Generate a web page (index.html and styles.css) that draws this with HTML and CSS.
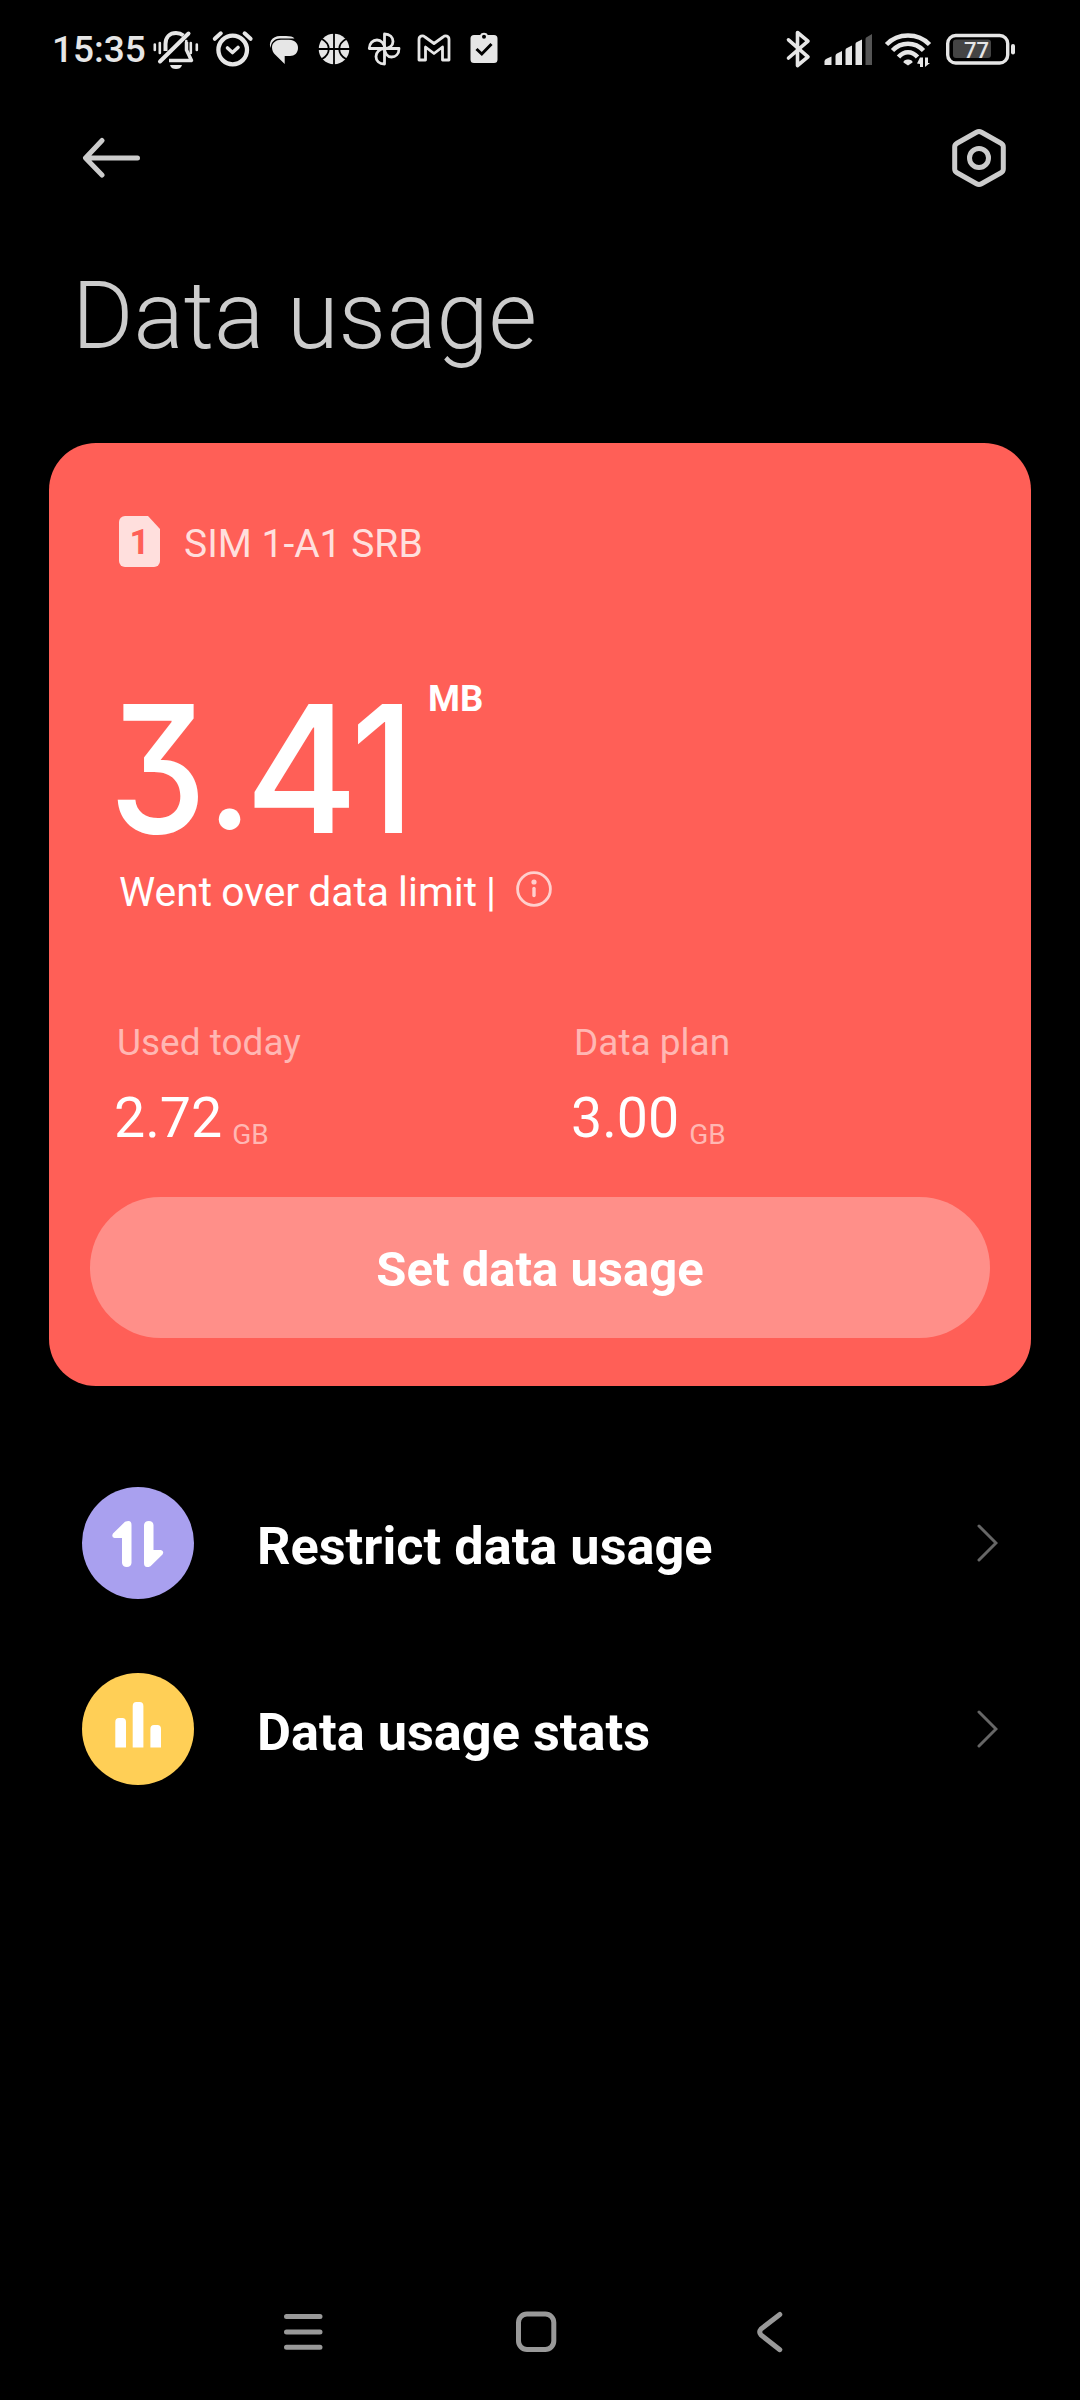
FILE: index.html
```html
<!DOCTYPE html>
<html lang="en">
<head>
    <meta charset="UTF-8">
    <meta name="viewport" content="width=device-width, initial-scale=1.0">
    <title>Data usage</title>
    <link rel="stylesheet" href="styles.css">
</head>
<body>
    <div class="status-bar">
        <span class="time">15:35</span>
        <!-- Notification icons -->
        <svg class="status-left" width="350" height="48" viewBox="150 26 350 48">
            <g fill="none" stroke="#e6e6e6" stroke-width="4" stroke-linecap="round" stroke-linejoin="round">
                <path d="M160 61.500L188.500 33.500"/>
                <path d="M165.500 51V44C165.500 37 170 33 176 33C179 33 181.500 34 183.500 35.500" stroke-linecap="butt"/>
                <path d="M186.500 42V50L191.500 60.500H169" stroke-width="3.500" stroke-linecap="butt"/>
                <path d="M154.800 44.500V50M159.800 43V53M190.800 43V53M196.800 44.500V50M186.300 41V48" stroke-width="2.600"/>
                <circle cx="232.700" cy="50" r="14.300" stroke-width="4.300"/>
                <path d="M214.800 38.800L220.800 33.300M250.600 38.800L244.600 33.300"/>
                <path d="M227.500 48L232.500 52.500L238 47.500" stroke-width="3.600"/>
            </g>
            <path fill="#e6e6e6" d="M170 65H182C181 68 179 69 176 69S171 68 170 65Z"/>
            <path fill="#e6e6e6" d="M280 36H286C290 36 293 36.700 294.500 38.500H280C274 38.500 270.500 43 270.800 48C269.500 46 269.700 43 271 40.500C273 37.500 276 36 280 36Z"/>
            <path fill="#e6e6e6" d="M281 39.800H289C295 39.800 298 43.500 298 48C298 53 294.500 56 290 56H284.700V64L275 54.500C273 52.500 272 50 272 47.500C272 43 276 39.800 281 39.800Z"/>
            <circle cx="334" cy="49" r="15.300" fill="#e6e6e6"/>
            <path d="M334 33V65M318 49H350M322 39C331 44 331 54 322 59M346 39C337 44 337 54 346 59" fill="none" stroke="#000" stroke-width="1.800"/>
            <g fill="none" stroke="#e6e6e6" stroke-width="2.800" stroke-linejoin="round">
                <path d="M384.500 48.500V34C390 34 393 37.500 393 41.500S389.500 48.500 384.500 48.500"/>
                <path d="M384.500 48.500H399C399 54 395.500 57 391.500 57S384.500 53.500 384.500 48.500"/>
                <path d="M384.500 48.500V64C379 64 376 60.500 376 56.500S379.500 48.500 384.500 48.500"/>
                <path d="M384.500 48.500H369.300C369.300 43 373 40 377 40S384.500 43.500 384.500 48.500"/>
                <path d="M419 60V39.500C419 36 422.500 35 425 37L434 43.500L443 37C445.500 35 449 36 449 39.500V60H442.500V47L434 53.500L425.500 47V60Z"/>
            </g>
            <path fill="#e6e6e6" fill-rule="evenodd" d="M474 35H480.300C481 32 487 32 487.700 35H494Q497.500 35 497.500 38.500V59.500Q497.500 63 494 63H474Q470.500 63 470.500 59.500V38.500Q470.500 35 474 35ZM484 34.800A2 2 0 1 0 484 38.800A2 2 0 1 0 484 34.800Z"/>
            <path d="M476.500 49L481.800 54L491.500 44" fill="none" stroke="#000" stroke-width="3"/>
        </svg>
        <!-- Bluetooth, signal, wifi, battery -->
        <svg class="status-right" width="240" height="48" viewBox="780 26 240 48">
            <path d="M788.500 39.800L808 56.800L797.500 65.500V32.500L808 41.200L788.500 58" fill="none" stroke="#e6e6e6" stroke-width="3.600" stroke-linejoin="round" stroke-linecap="round"/>
            <g fill="#e6e6e6">
                <path d="M824.500 65V61Q825 59 827 58.500L831.500 56.500V65Z"/>
                <path d="M835.500 65V56Q835.500 54 837 53.500L842 51V65Z"/>
                <path d="M845.500 65V50Q845.500 48.500 847 48L852 45.500V65Z"/>
                <path d="M855.500 65V44Q855.500 42.500 857 42L862 39.500V65Z"/>
                <path d="M865.500 65V39Q865.500 37.500 867 37L872 34V65Z" fill="#555"/>
                <path d="M908 65.500L903.500 62.500C903 58.500 913 58.500 912.500 62.500Z"/>
                <path d="M920 57.500H923V67H920V64L917 63.500ZM925 57.500H928V63H930L925 67Z"/>
            </g>
            <g fill="none" stroke="#e6e6e6" stroke-width="4.500">
                <path d="M886.500 44.500C898 32.500 918 32.500 929.500 44.500"/>
                <path d="M892.500 50.500C901 41.500 915 41.500 923.500 50.500"/>
                <path d="M898.500 57C904 50.500 912 50.500 917.500 57"/>
                <rect x="947.700" y="35.500" width="60" height="27.500" rx="8" stroke-width="3.400"/>
            </g>
            <rect x="953" y="39.500" width="38" height="18.500" rx="3" fill="#444"/>
            <text class="battery-text" x="964" y="57.500">77</text>
            <rect x="1011" y="44" width="4" height="10.500" rx="2" fill="#e6e6e6"/>
        </svg>
    </div>

    <header class="toolbar">
        <svg width="60" height="42" viewBox="82 137 60 42" fill="none" stroke="#ccc" stroke-width="5" stroke-linecap="round" stroke-linejoin="round">
            <path d="M86 158H137.500M102 140.500L85.500 158L102 175"/>
        </svg>
        <svg width="54" height="60" viewBox="952 128 54 60" fill="none" stroke="#ccc" stroke-width="5">
            <path d="M976.500 132.200Q979 130.800 981.500 132.200L1001 143.200Q1003.300 144.500 1003.300 147V169Q1003.300 171.500 1001 172.800L981.500 183.800Q979 185.200 976.500 183.800L957 172.800Q954.700 171.500 954.700 169V147Q954.700 144.500 957 143.200Z"/>
            <circle cx="979" cy="158" r="9.500"/>
        </svg>
    </header>

    <h1>Data usage</h1>

    <main class="card">
        <div class="sim">
            <div class="sim-icon">1</div>
            <span>SIM 1-A1 SRB</span>
        </div>
        <div class="amount">
            <div class="number"><span class="three">3</span><span class="dot">.</span><span class="four">4</span><span class="one">1</span></div>
            <span class="unit">MB</span>
        </div>
        <div class="limit">
            <span>Went over data limit |</span>
            <svg width="36" height="36" viewBox="0 0 36 36">
                <circle cx="18" cy="18" r="16.400" fill="none" stroke="#ffcfcd" stroke-width="2.800"/>
                <circle cx="18" cy="11" r="2.600" fill="#ffcfcd"/>
                <path d="M18 17.500V24.500" stroke="#ffcfcd" stroke-width="3.400" stroke-linecap="round"/>
            </svg>
        </div>
        <div class="stats">
            <div class="stat">
                <div class="label">Used today</div>
                <div class="value">2.72<small>GB</small></div>
            </div>
            <div class="stat">
                <div class="label">Data plan</div>
                <div class="value">3.00<small>GB</small></div>
            </div>
        </div>
        <button class="btn">Set data usage</button>
    </main>

    <div class="list">
        <a class="item">
            <svg class="item-icon" width="112" height="112" viewBox="82 1487 112 112">
                <circle cx="138" cy="1543" r="56" fill="#a9a0ef"/>
                <path fill="#fff" d="M122 1538H114.500Q111 1537 113 1533.500L125 1521.800Q131.500 1519 131.500 1525V1563Q131 1567 126.800 1567T122 1563ZM144 1525Q144.500 1521 148.800 1521T153.500 1525V1550H161Q164.500 1551 162.500 1554.500L150.500 1566.200Q144 1569 144 1563Z"/>
            </svg>
            <span>Restrict data usage</span>
            <svg class="chevron" width="22" height="40" viewBox="0 0 22 40"><path d="M3 3L20 20L3 37"/></svg>
        </a>
        <a class="item">
            <svg class="item-icon" width="112" height="112" viewBox="82 1673 112 112">
                <circle cx="138" cy="1729" r="56" fill="#ffcf56"/>
                <path fill="#fff" d="M115.300 1747.500V1722Q115.300 1718 119 1718H122.300Q126 1718 126 1722V1747.500ZM132.700 1747.500V1706Q132.700 1702 136.400 1702H139.700Q143.400 1702 143.400 1706V1747.500ZM150.400 1747.500V1729Q150.400 1725 154 1725H157.300Q161 1725 161 1729V1747.500Z"/>
            </svg>
            <span>Data usage stats</span>
            <svg class="chevron" width="22" height="40" viewBox="0 0 22 40"><path d="M3 3L20 20L3 37"/></svg>
        </a>
    </div>

    <nav class="nav-bar">
        <svg width="40" height="44" viewBox="283 2310 40 44"><path d="M286.500 2316.500H320M286.500 2332H320M286.500 2347.300H320"/></svg>
        <svg class="home" width="42" height="44" viewBox="515 2310 42 44"><rect x="518.500" y="2314" width="35.300" height="35.500" rx="8.500"/></svg>
        <svg class="back" width="28" height="44" viewBox="755 2310 28 44"><path d="M779.800 2314.500L761 2329Q758.500 2332 761 2335L779.800 2349.700"/></svg>
    </nav>
</body>
</html>
```

FILE: styles.css
```css
:root {
    --bg: #000;
    --card: #ff5f57;
    --text: #fff;
    --text-title: #ccc;
    --text-faded: #ffb7b3;
}

* {
    box-sizing: border-box;
}

body {
    font-family: Roboto, sans-serif;
    background: var(--bg);
    color: var(--text);
    margin: 0;
    height: 2400px;
    display: flex;
    flex-direction: column;
}

svg {
    display: block;
    flex-shrink: 0;
}

.status-bar {
    display: flex;
    align-items: center;
    height: 100px;
    padding: 0 60px 0 52px;
}

.time {
    width: 98px;
    font-size: 37px;
    font-weight: 500;
    color: #e6e6e6;
    line-height: 48px;
}

.status-right {
    margin-left: auto;
}

.battery-text {
    font-size: 22px;
    font-weight: 500;
    fill: #e6e6e6;
}

.toolbar {
    display: flex;
    align-items: center;
    justify-content: space-between;
    height: 116px;
    padding: 0 74px 0 82px;
}

h1 {
    margin: 45px 0 0 72px;
    font-size: 93.8px;
    font-weight: 300;
    line-height: 110px;
    color: var(--text-title);
}

.card {
    width: 982px;
    height: 943px;
    margin: 72px 49px 0;
    padding: 73px 41px 48px;
    background: var(--card);
    border-radius: 47px;
    display: flex;
    flex-direction: column;
}

.sim {
    display: flex;
    align-items: center;
    gap: 24px;
    padding-left: 29px;
    height: 51px;
    font-size: 39px;
    color: #ffdfdd;
}

.sim span {
    padding-top: 4px;
}

.sim-icon {
    width: 41px;
    height: 51px;
    border-radius: 6px;
    clip-path: polygon(0 0, 29px 0, 41px 13px, 41px 100%, 0 100%);
    background: #ffdfdd;
    color: var(--card);
    font-size: 35px;
    font-weight: 700;
    line-height: 53px;
    text-align: center;
}

.amount {
    display: flex;
    align-items: flex-start;
    height: 180px;
    margin-top: 104px;
    padding-left: 19px;
}

.number {
    display: flex;
    width: 319px;
    font-family: Inter, sans-serif;
    font-size: 177px;
    font-weight: 500;
    line-height: 196px;
    font-feature-settings: "cv09";
}

/* narrow digits */
.number span {
    transform-origin: 0 140px;
}

.three {
    width: 98px;
    transform: scaleX(0.876);
}

.dot {
    width: 38px;
    transform: scale(0.84);
}

.four {
    width: 106px;
    transform: scaleX(0.975);
}

.one {
    width: 56px;
    transform: scaleX(0.86);
}

.unit {
    font-size: 36.5px;
    font-weight: 700;
    line-height: 55px;
}

.limit {
    display: flex;
    align-items: center;
    gap: 20px;
    height: 50px;
    margin-top: 13px;
    padding-left: 29px;
    font-size: 40.8px;
}

.limit span {
    padding-top: 5px;
    word-spacing: -1px;
}

.stats {
    display: flex;
    margin-top: 107px;
    padding-left: 27px;
}

.stat {
    flex: 0 0 457px;
}

.label {
    font-size: 37px;
    line-height: 44px;
    color: var(--text-faded);
}

.value {
    margin-top: 21px;
    margin-left: -3px;
    font-size: 55.5px;
    line-height: 66px;
}

.value small {
    position: relative;
    top: 7px;
    margin-left: 10px;
    font-size: 28px;
    color: var(--text-faded);
}

.btn {
    height: 141px;
    margin-top: auto;
    padding-top: 4px;
    border: none;
    border-radius: 71px;
    background: #ff8f89;
    color: var(--text);
    font-family: inherit;
    font-size: 49px;
    font-weight: 700;
}

.list {
    padding: 64px 82px 0 82px;
}

.item {
    display: flex;
    align-items: center;
    height: 186px;
    font-size: 52.3px;
    font-weight: 700;
}

.item-icon {
    margin-right: 63px;
}

.item span {
    padding-top: 5px;
}

.chevron {
    margin-left: auto;
    fill: none;
    stroke: #666;
    stroke-width: 3;
    stroke-linecap: round;
}

.nav-bar {
    display: flex;
    align-items: center;
    height: 136px;
    margin-top: auto;
    padding-left: 283px;
    fill: none;
    stroke: #999;
    stroke-width: 5;
    stroke-linecap: round;
}

.home {
    margin-left: 192px;
}

.back {
    margin-left: 198px;
}
```
